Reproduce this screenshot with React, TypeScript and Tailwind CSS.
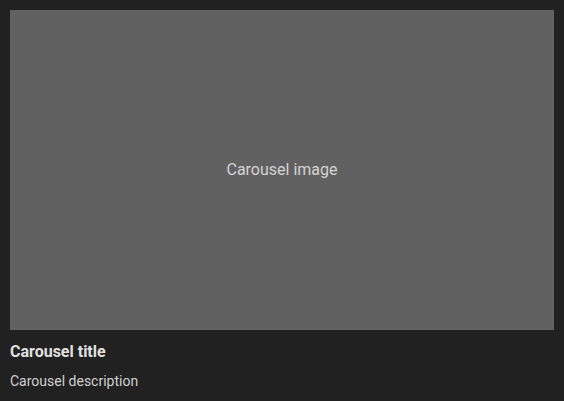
export default function App() {
  return (
    <div className="h-[401px] w-[564px] bg-[#212121] p-[10px] font-['Roboto',sans-serif]">
      <div className="flex h-[320px] w-full items-center justify-center bg-[#616161]">
        <span className="text-base text-[#d4d4d4]">Carousel image</span>
      </div>
      <h3 className="mt-[10px] text-base font-bold leading-6 text-[#e0e0e0]">Carousel title</h3>
      <p className="mt-[7px] text-sm leading-5 text-[#d0d0d0]">Carousel description</p>
    </div>
  );
}
